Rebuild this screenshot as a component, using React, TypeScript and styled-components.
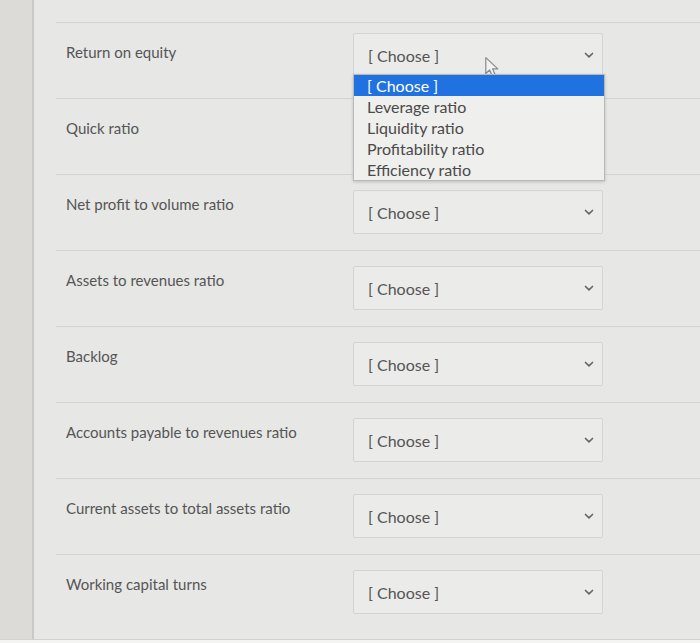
import styled, { createGlobalStyle } from "styled-components";

const GlobalStyle = createGlobalStyle`
  html, body {
    margin: 0;
    padding: 0;
    background: #f4f4f2;
  }
  body {
    font-family: Lato, "Liberation Sans", sans-serif;
  }
`;

const rows = [
  "Return on equity",
  "Quick ratio",
  "Net profit to volume ratio",
  "Assets to revenues ratio",
  "Backlog",
  "Accounts payable to revenues ratio",
  "Current assets to total assets ratio",
  "Working capital turns",
];

const options = [
  "[ Choose ]",
  "Leverage ratio",
  "Liquidity ratio",
  "Profitability ratio",
  "Efficiency ratio",
];

const Chevron = () => (
  <svg width="10" height="7" viewBox="0 0 10 7">
    <path
      d="M1.5 1.5 L5 4.8 L8.5 1.5"
      fill="none"
      stroke="#666"
      strokeWidth="1.7"
      strokeLinecap="round"
    />
  </svg>
);

const Cursor = () => (
  <SCursor width="20" height="24" viewBox="0 0 18 22">
    <path
      d="M1.5 1.5 L1.5 16 L5 12.8 L8 19.5 L10.6 18.3 L7.7 11.8 L12.5 11.8 Z"
      fill="#f2f2f2"
      stroke="#8a8a8a"
      strokeWidth="1.1"
      strokeLinejoin="round"
    />
  </SCursor>
);

export default function App() {
  return (
    <>
      <GlobalStyle />
      <SPage>
        <SStrip />
        <SPanel>
          {rows.map((label, i) => (
            <SRow key={label} last={i === rows.length - 1}>
              <SLabel>{label}</SLabel>
              <SSelectWrap first={i === 0}>
                {/* row 2's select sits under the open list */}
                <SSelect covered={i === 1}>
                  <span>[ Choose ]</span>
                  <Chevron />
                </SSelect>
                {i === 0 && (
                  <>
                    <Cursor />
                    <SList>
                      {options.map((opt, j) => (
                        <SOption key={opt} active={j === 0}>
                          {opt}
                        </SOption>
                      ))}
                    </SList>
                  </>
                )}
              </SSelectWrap>
            </SRow>
          ))}
        </SPanel>
      </SPage>
    </>
  );
}

const SPage = styled.div`
  display: flex;
  width: 700px;
  height: 639px;
  background: #e7e7e5;
  border-bottom: 1px solid #d2d2d0;
`;

const SStrip = styled.div`
  width: 32px;
  flex-shrink: 0;
  background: #dcdbd7;
  border-right: 2px solid #cbcac6;
`;

const SPanel = styled.div`
  flex: 1;
  padding-top: 22px;
  padding-left: 22px;
  display: flex;
  flex-direction: column;
`;

const SRow = styled.div<{ last?: boolean }>`
  display: grid;
  grid-template-columns: 297px 250px;
  height: ${(p) => (p.last ? "84px" : "76px")};
  border-top: 1px solid #d3d3d1;
  box-sizing: border-box;
`;

const SLabel = styled.div`
  padding: 20px 0 0 10px;
  font-size: 15px;
  line-height: 18px;
  color: #555;
`;

const SSelectWrap = styled.div<{ first?: boolean }>`
  position: relative;
  padding-top: ${(p) => (p.first ? "10px" : "15px")};
`;

const SSelect = styled.div<{ covered?: boolean }>`
  display: flex;
  align-items: center;
  justify-content: space-between;
  height: 44px;
  box-sizing: border-box;
  padding: 0 8px 0 14px;
  background: #ebebe9;
  border: 1px solid #d4d4d2;
  border-radius: 2px;
  font-size: 16px;
  color: #555;
  visibility: ${(p) => (p.covered ? "hidden" : "visible")};
`;

const SCursor = styled.svg`
  position: absolute;
  left: 131px;
  top: 33px;
`;

const SList = styled.div`
  position: absolute;
  top: 51px;
  left: 0;
  width: 250px;
  background: #efefed;
  border: 1px solid #b9b9b7;
  box-shadow: 0 1px 3px rgba(0, 0, 0, 0.18);
  z-index: 2;
`;

const SOption = styled.div<{ active?: boolean }>`
  height: 21px;
  line-height: 21px;
  padding-left: 13px;
  font-size: 16px;
  background: ${(p) => (p.active ? "#1f72e0" : "transparent")};
  color: ${(p) => (p.active ? "#fff" : "#4a4a4a")};
`;
